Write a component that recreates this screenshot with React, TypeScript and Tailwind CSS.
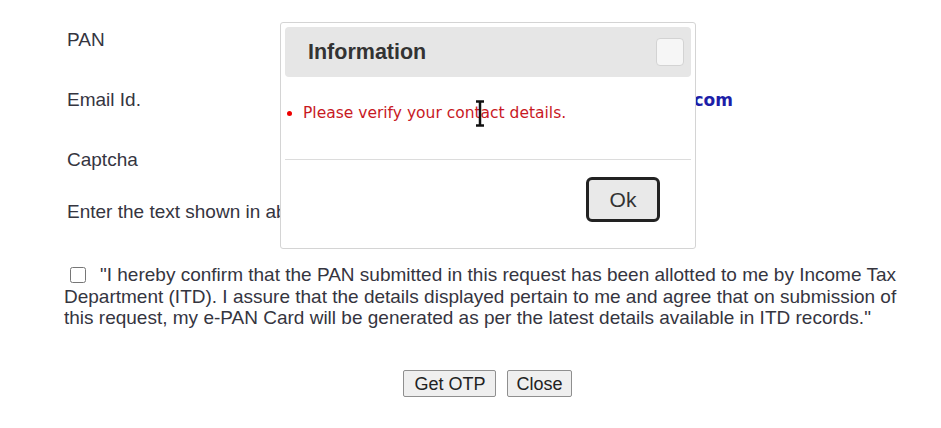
import { useState } from "react";

const labels = [
  { text: "PAN", h: "h-[60px]" },
  { text: "Email Id.", h: "h-[60px]" },
  { text: "Captcha", h: "h-[52px]" },
  { text: "Enter the text shown in above image", h: "h-[40px]" },
];

function InfoDialog({ onClose }: { onClose: () => void }) {
  return (
    <div className="absolute left-[280px] top-[22px] w-[416px] h-[227px] bg-white border border-[#d4d4d4] rounded-[3px] p-[4px] flex flex-col">
      <div className="h-[50px] bg-[#e6e6e6] rounded-[4px] flex items-center justify-between pl-[23px] pr-[7px]">
        <span className="font-['Liberation_Sans',Arial,sans-serif] font-bold text-[21.5px] text-[#333]">
          Information
        </span>
        <button
          onClick={onClose}
          className="w-[28px] h-[28px] bg-[#f6f6f6] border border-[#d3d3d3] rounded-[4px]"
        />
      </div>
      <ul className="h-[83px] border-b border-[#dcdcdc] pt-[26px] pl-[18px] list-disc marker:text-[#e00]">
        <li className="font-['DejaVu_Sans',Verdana,sans-serif] text-[15.5px] leading-[20px] text-[#c8191f]">
          Please verify your contact details.
        </li>
      </ul>
      <div className="flex justify-end pt-[17px] pr-[31px]">
        <button
          onClick={onClose}
          className="w-[74px] h-[45px] bg-[#e9e9e9] border-[3px] border-[#222] rounded-[6px] font-['Liberation_Sans',Arial,sans-serif] text-[21px] text-[#333]"
        >
          Ok
        </button>
      </div>
      {/* text cursor */}
      <svg
        className="absolute left-[194px] top-[77px]"
        width="10"
        height="27"
        viewBox="0 0 10 27"
      >
        <path
          d="M1 1.5h8M1 25.5h8M5 1.5v24"
          stroke="#111"
          strokeWidth="2.5"
          fill="none"
        />
      </svg>
    </div>
  );
}

export default function App() {
  const [open, setOpen] = useState(true);
  const [agree, setAgree] = useState(false);

  return (
    <div className="relative w-[941px] h-[428px] bg-white font-['Liberation_Sans',Arial,sans-serif] text-[#35353f]">
      <div className="pt-[26px] pl-[67px] flex">
        <div className="w-[380px] text-[19px]">
          {labels.map((l) => (
            <div key={l.text} className={`${l.h}`}>
              {l.text}
            </div>
          ))}
        </div>
        <div className="pt-[62px]">
          <span className="inline-block w-[286px] text-right text-[17px] font-['DejaVu_Sans',Verdana,sans-serif] font-bold text-[#1d1ea8]">
            abcd1234@gmail.com
          </span>
        </div>
      </div>

      <div className="mt-[26px] pl-[64px] pr-[36px] text-[19px] leading-[21.5px]">
        <input
          type="checkbox"
          checked={agree}
          onChange={(e) => setAgree(e.target.checked)}
          className="w-[16px] h-[16px] ml-[6px] mr-[14px] align-[-2px] accent-[#555]"
        />
        "I hereby confirm that the PAN submitted in this request has been
        allotted to me by Income Tax Department (ITD). I assure that the details
        displayed pertain to me and agree that on submission of this request, my
        e-PAN Card will be generated as per the latest details available in ITD
        records."
      </div>

      <div className="mt-[41px] flex justify-center gap-[11px] pl-[34px]">
        <button className="h-[27px] px-[10px] bg-[#efefef] border border-[#8f8f8f] rounded-[2px] text-[18px] text-[#222]">
          Get OTP
        </button>
        <button className="h-[27px] px-[8px] bg-[#efefef] border border-[#8f8f8f] rounded-[2px] text-[18px] text-[#222]">
          Close
        </button>
      </div>

      {open && <InfoDialog onClose={() => setOpen(false)} />}
    </div>
  );
}
